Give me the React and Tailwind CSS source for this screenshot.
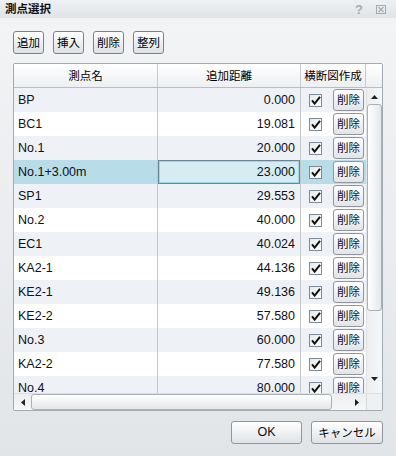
const rows = [
  ['BP', '0.000'],
  ['BC1', '19.081'],
  ['No.1', '20.000'],
  ['No.1+3.00m', '23.000'],
  ['SP1', '29.553'],
  ['No.2', '40.000'],
  ['EC1', '40.024'],
  ['KA2-1', '44.136'],
  ['KE2-1', '49.136'],
  ['KE2-2', '57.580'],
  ['No.3', '60.000'],
  ['KA2-2', '77.580'],
  ['No.4', '80.000'],
];

const jp = "font-['Noto_Sans_CJK_JP','Liberation_Sans',sans-serif] text-[11.5px] leading-none";

// 小さい三角（スクロールバーの矢印）
const Arrow = ({ dir }) => {
  const pts = {
    up: '0,4 3.5,0 7,4',
    down: '0,0 3.5,4 7,0',
    left: '4,0 0,3.5 4,7',
    right: '0,0 4,3.5 0,7',
  }[dir];
  const vertical = dir === 'up' || dir === 'down';
  return (
    <svg width={vertical ? 7 : 4} height={vertical ? 4 : 7} className="block">
      <polygon points={pts} fill="#1f2328" />
    </svg>
  );
};

const ToolButton = ({ label }) => (
  <button className="w-[31px] h-[23px] flex items-center justify-center rounded-[3px] border border-[#75838f] bg-gradient-to-b from-[#ffffff] to-[#dde1e5] shadow-[inset_0_1px_0_#ffffff]">
    <span className={jp}>{label}</span>
  </button>
);

const CheckBox = () => (
  <div className="w-[13px] h-[13px] border border-[#7f8a94] bg-gradient-to-br from-[#e6e9ec] to-[#ffffff] flex items-center justify-center">
    <svg width="10" height="9" viewBox="0 0 10 9" className="block">
      <path d="M1 4.4 L3.6 7.6 L9 0.8" fill="none" stroke="#111" strokeWidth="2" />
    </svg>
  </div>
);

const Row = ({ name, dist, index }) => {
  const selected = index === 3;
  const bg = selected ? 'bg-[#b8dce8]' : index % 2 === 0 ? 'bg-[#eef2f7]' : 'bg-white';
  return (
    <div className="flex h-[24px] shrink-0 text-[12.5px] text-[#111]">
      <div className={`w-[144px] shrink-0 border-r border-[#c4c8cc] flex items-center pl-[4px] ${bg}`}>
        {name}
      </div>
      {selected ? (
        <div className="w-[143px] shrink-0 border-r border-[#c4c8cc] bg-[#b8dce8] flex">
          <div className="flex-1 border border-[#6a8796] flex">
            <div className="flex-1 border border-[#9fd6e4] bg-[#d5ecf3] flex items-center justify-end pr-[3px]">
              {dist}
            </div>
          </div>
        </div>
      ) : (
        <div className={`w-[143px] shrink-0 border-r border-[#c4c8cc] flex items-center justify-end pr-[5px] ${bg}`}>
          {dist}
        </div>
      )}
      <div className={`w-[65px] shrink-0 flex items-center pl-[8px] ${bg}`}>
        <CheckBox />
        <button className="ml-[11px] w-[31px] h-[22px] flex items-center justify-center rounded-[3px] border border-[#8f969d] bg-gradient-to-b from-[#ffffff] to-[#e2e5e8]">
          <span className={jp}>削除</span>
        </button>
      </div>
    </div>
  );
};

export default function App() {
  return (
    <div className="w-[396px] h-[456px] flex flex-col overflow-hidden bg-gradient-to-b from-[#f3f4f6] to-[#e2e5e8] text-black font-['Liberation_Sans','Noto_Sans_CJK_JP',sans-serif]">
      {/* タイトルバー */}
      <div className="h-[18px] shrink-0 flex items-center justify-between pl-[5px] pr-[10px] bg-gradient-to-b from-[#eef0f2] to-[#e1e4e7]">
        <span className={`${jp} font-bold text-[#111]`}>測点選択</span>
        <div className="flex items-center gap-[13px]">
          <span className="text-[13px] font-bold text-[#a8abae] leading-none">?</span>
          <svg width="10" height="9" viewBox="0 0 10 9" className="block">
            <rect x="0.5" y="0.5" width="9" height="8" fill="none" stroke="#a8abae" />
            <path d="M2.5 2 L7.5 7 M7.5 2 L2.5 7" stroke="#a8abae" strokeWidth="1.2" />
          </svg>
        </div>
      </div>

      <div className="flex flex-col px-[13px] pt-[13px]">
        {/* ツールボタン */}
        <div className="flex gap-[9px]">
          <ToolButton label="追加" />
          <ToolButton label="挿入" />
          <ToolButton label="削除" />
          <ToolButton label="整列" />
        </div>

        {/* 表 */}
        <div className="mt-[9px] w-[370px] h-[348px] border border-[#a3aab1] rounded-[2px] flex flex-col bg-white overflow-hidden">
          {/* ヘッダー */}
          <div className="flex h-[24px] shrink-0 border-b border-[#b9bec3] bg-gradient-to-b from-[#ffffff] to-[#edeff2]">
            <div className="w-[144px] border-r border-[#c8ccd0] flex items-center justify-center">
              <span className={jp}>測点名</span>
            </div>
            <div className="w-[143px] border-r border-[#c8ccd0] flex items-center justify-center">
              <span className={jp}>追加距離</span>
            </div>
            <div className="w-[65px] border-r border-[#c8ccd0] flex items-center justify-center">
              <span className={jp}>横断図作成</span>
            </div>
            <div className="flex-1" />
          </div>

          {/* 行と縦スクロールバー */}
          <div className="flex h-[305px] shrink-0">
            <div className="w-[352px] flex flex-col overflow-hidden">
              {rows.map(([name, dist], i) => (
                <Row key={name} name={name} dist={dist} index={i} />
              ))}
            </div>
            <div className="flex-1 flex flex-col bg-gradient-to-r from-[#eceef0] to-[#f6f7f8] border-l border-[#e0e3e6]">
              <div className="h-[16px] flex items-center justify-center pt-[1px]">
                <Arrow dir="up" />
              </div>
              <div className="h-[207px] rounded-[3px] border border-[#aab0b6] bg-gradient-to-r from-[#ffffff] to-[#e4e7ea]" />
              <div className="flex-1" />
              <div className="h-[16px] flex items-center justify-center mb-[6px]">
                <Arrow dir="down" />
              </div>
            </div>
          </div>

          {/* 横スクロールバー */}
          <div className="flex flex-1 border-t border-[#dde0e3]">
            <div className="w-[352px] flex items-center bg-gradient-to-b from-[#eceef0] to-[#f6f7f8]">
              <div className="w-[17px] flex items-center justify-center">
                <Arrow dir="left" />
              </div>
              <div className="w-[301px] h-full rounded-[3px] border border-[#aab0b6] bg-gradient-to-b from-[#ffffff] to-[#e4e7ea]" />
              <div className="flex-1 flex items-center justify-end pr-[7px]">
                <Arrow dir="right" />
              </div>
            </div>
            <div className="flex-1 bg-[#eef0f2] border-l border-[#d6dadd]" />
          </div>
        </div>

        {/* OK / キャンセル */}
        <div className="mt-[10px] flex justify-end gap-[9px]">
          <button className="w-[71px] h-[23px] flex items-center justify-center rounded-[3px] border border-[#8f979e] bg-gradient-to-b from-[#ffffff] to-[#dfe2e6] text-[12.5px] text-[#111]">
            OK
          </button>
          <button className="w-[72px] h-[23px] flex items-center justify-center rounded-[3px] border border-[#8f979e] bg-gradient-to-b from-[#ffffff] to-[#dfe2e6]">
            <span className={jp}>キャンセル</span>
          </button>
        </div>
      </div>
    </div>
  );
}
